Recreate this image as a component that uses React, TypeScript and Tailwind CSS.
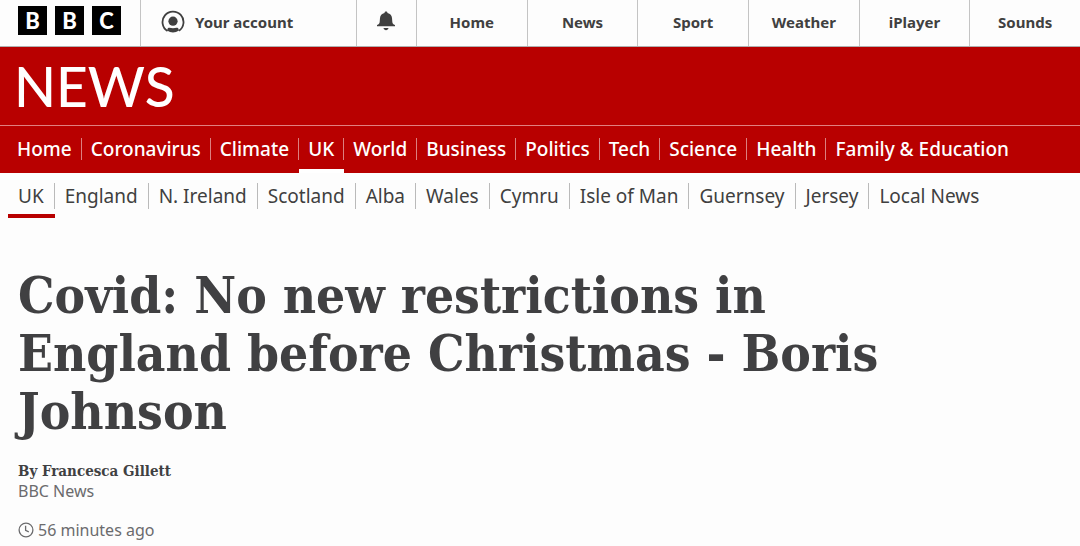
import clsx from 'clsx';

interface NavListProps {
    items: string[];
    current: string;
    label: string;
}

const siteLinks = ['Home', 'News', 'Sport', 'Weather', 'iPlayer', 'Sounds'];

const sections = [
    'Home',
    'Coronavirus',
    'Climate',
    'UK',
    'World',
    'Business',
    'Politics',
    'Tech',
    'Science',
    'Health',
    'Family & Education'
];

const regions = [
    'UK',
    'England',
    'N. Ireland',
    'Scotland',
    'Alba',
    'Wales',
    'Cymru',
    'Isle of Man',
    'Guernsey',
    'Jersey',
    'Local News'
];

function AccountIcon() {
    return (
        <svg className="h-6 w-6 shrink-0" viewBox="0 0 24 24" fill="none" aria-hidden="true">
            <path d="M6.500 21a10.500 10.500 0 1 1 11.500-.3" stroke="currentColor" strokeWidth={1.800} />
            <circle cx="12" cy="11.200" r="4.600" fill="currentColor" />
            <path
                d="M6.800 18.200c1.600-.9 3.200 0 5.200 0s3.600-.9 5.200 0l.8 2.300a10.800 10.800 0 0 1-12 0z"
                fill="currentColor"
            />
        </svg>
    );
}

function BellIcon() {
    return (
        <svg className="h-5 w-5" viewBox="0 0 20 20" fill="currentColor" aria-hidden="true">
            <path d="M10 .6c.8 0 1.400.5 1.500 1.400 2.800.6 4.300 2.400 4.500 5l.3 3.700c.2 1.900.8 2.600 2.700 3.200v1.400H1v-1.400c1.900-.6 2.500-1.300 2.700-3.200L4 7c.2-2.600 1.700-4.400 4.500-5 .1-.9.700-1.400 1.500-1.400z" />
            <path d="M7.500 17h5c-.3 1.400-1.200 2.200-2.500 2.200S7.800 18.400 7.500 17z" />
        </svg>
    );
}

function ClockIcon() {
    return (
        <svg className="h-4 w-4" viewBox="0 0 16 16" fill="none" stroke="currentColor" aria-hidden="true">
            <circle cx="8" cy="8" r="6.900" strokeWidth={1.300} />
            <path d="M7.600 3.800v4.500l3.200 1.500" strokeWidth={1.300} />
        </svg>
    );
}

function SiteHeader() {
    return (
        <header className="flex h-[47px] border-b border-[#b0b0b0] text-[15px] font-bold text-[#404040]">
            <a href="#" aria-label="BBC" className="flex w-[140px] shrink-0 items-start gap-2 pt-1.5 pl-[18px]">
                {['B', 'B', 'C'].map((letter, i) => (
                    <span
                        key={i}
                        className="flex h-[29px] w-[29px] items-center justify-center bg-black font-[Lato] text-[22px] leading-none font-black text-white"
                    >
                        {letter}
                    </span>
                ))}
            </a>
            <a href="#" className="flex w-[216px] shrink-0 items-center gap-2.5 border-l border-[#c4c4c4] pb-0.5 pl-5">
                <AccountIcon />
                Your account
            </a>
            <button
                type="button"
                aria-label="Notifications"
                className="flex w-[60px] shrink-0 items-center justify-center border-l border-[#c4c4c4] pr-0.5 pb-1"
            >
                <BellIcon />
            </button>
            <nav aria-label="BBC" className="flex flex-1">
                {siteLinks.map((link) => (
                    <a
                        key={link}
                        href="#"
                        className="flex flex-1 items-center justify-center border-l border-[#c4c4c4] pb-0.5"
                    >
                        {link}
                    </a>
                ))}
            </nav>
        </header>
    );
}

function SectionNav({ items, current, label }: NavListProps) {
    return (
        <nav aria-label={label} className="border-t border-[#e08080] bg-[#b80000] pl-2 text-white">
            <ul className="flex pt-3">
                {items.map((item, i) => (
                    <li
                        key={item}
                        className={clsx(
                            'border-b-4 pb-[9px]',
                            item === current ? 'border-white' : 'border-transparent'
                        )}
                    >
                        <a
                            href="#"
                            className={clsx(
                                'block px-[9px] text-[19px] leading-[22px] font-medium whitespace-nowrap',
                                i < items.length - 1 && 'border-r border-[#dc8080]'
                            )}
                        >
                            {item}
                        </a>
                    </li>
                ))}
            </ul>
        </nav>
    );
}

function RegionNav({ items, current, label }: NavListProps) {
    return (
        <nav aria-label={label} className="pl-2 text-[#404040]">
            <ul className="flex pt-2.5">
                {items.map((item, i) => (
                    <li
                        key={item}
                        className={clsx(
                            'border-b-4 pb-[5px]',
                            item === current ? 'border-[#b80000]' : 'border-transparent'
                        )}
                    >
                        <a
                            href="#"
                            className={clsx(
                                'block px-2.5 text-[19px] leading-[26px] whitespace-nowrap',
                                i < items.length - 1 && 'border-r border-[#bababa]'
                            )}
                        >
                            {item}
                        </a>
                    </li>
                ))}
            </ul>
        </nav>
    );
}

export default function App() {
    return (
        <div className="min-h-screen bg-[#fdfdfd] font-['Noto_Sans',sans-serif]">
            <SiteHeader />

            <div className="bg-[#b80000]">
                <a
                    href="#"
                    className="block h-[78px] pl-3.5 font-['Lato_Medium','Lato',sans-serif] text-[55px] leading-[78px] font-medium text-white"
                >
                    NEWS
                </a>
            </div>
            <SectionNav items={sections} current="UK" label="News sections" />
            <RegionNav items={regions} current="UK" label="UK regions" />

            <main className="px-[18px] pt-12">
                <h1 className="max-w-[900px] font-['DejaVu_Serif_Condensed','DejaVu_Serif',serif] text-[51px] leading-[58px] font-bold text-[#404042]">
                    Covid: No new restrictions in England before Christmas - Boris Johnson
                </h1>
                <div className="pt-[22px]">
                    <p className="font-['DejaVu_Serif_Condensed','DejaVu_Serif',serif] text-[15px] leading-[19px] font-bold text-[#404042]">
                        By Francesca Gillett
                    </p>
                    <p className="text-base leading-5 text-[#6b6b6d]">BBC News</p>
                </div>
                <p className="flex items-center gap-1 pt-[19px] text-base leading-5 text-[#6b6b6d]">
                    <ClockIcon />
                    <time>56 minutes ago</time>
                </p>
            </main>
        </div>
    );
}
